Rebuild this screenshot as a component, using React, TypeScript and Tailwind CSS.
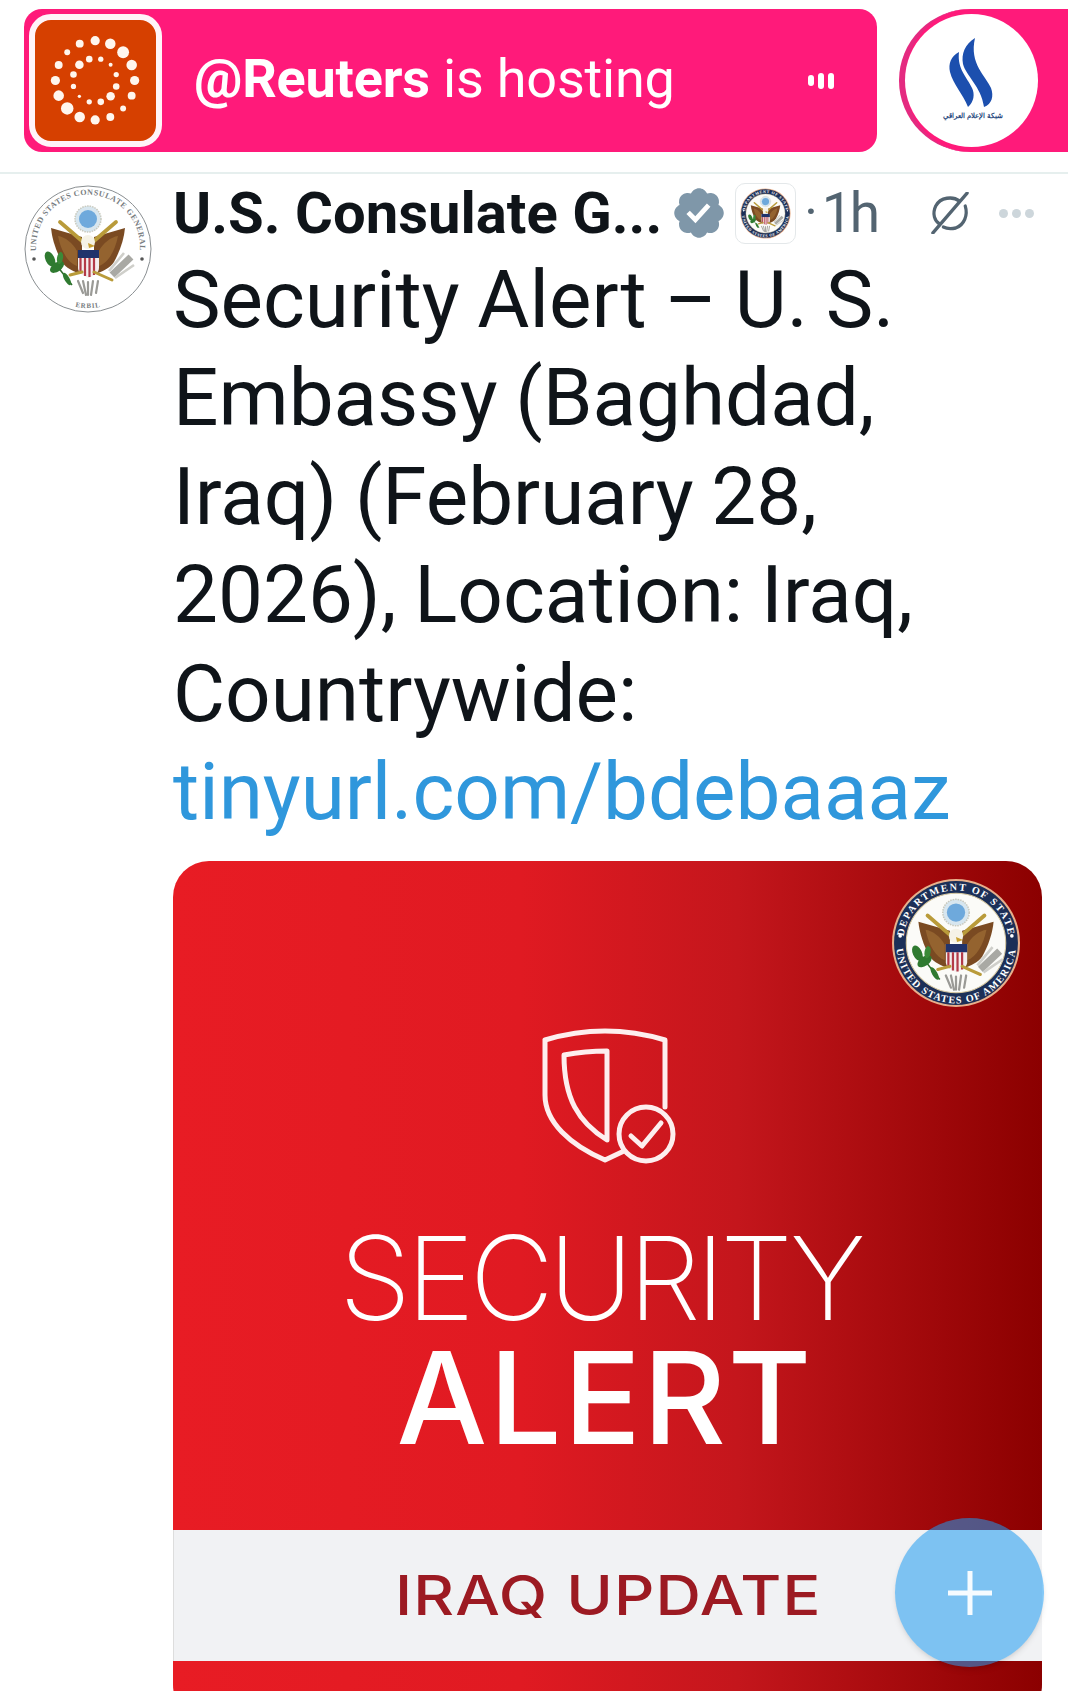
import React from "react";

const Seal = ({ id, ring = "navy" }: { id: string; ring?: "navy" | "plain" }) => {
  const plain = ring === "plain";
  return (
    <svg viewBox="-64 -64 128 128" className="w-full h-full block">
      <circle r="63" fill={plain ? "#ffffff" : "#e8b08c"} stroke={plain ? "#8a8f92" : "none"} strokeWidth={plain ? 1 : 0} />
      {!plain && <circle r="61" fill="#1c2f57" />}
      {!plain && <circle r="49" fill="#fbfbf8" stroke="#d8c9a0" strokeWidth="1" />}
      <defs>
        <path id={`${id}t`} d={plain ? "M -51 8 A 52 52 0 1 1 51 8" : "M -51 -10 A 52 52 0 0 1 51 -10"} />
        <path id={`${id}b`} d={plain ? "M -30 51 A 60 60 0 0 0 30 51" : "M -58.4 -8 A 59 59 0 1 0 58.4 -8"} />
      </defs>
      <text fontFamily="'Liberation Serif', serif" fontSize={plain ? 8 : 10} fontWeight="700" fill={plain ? "#777c80" : "#ffffff"} letterSpacing={plain ? 0.5 : 1.6} textAnchor="middle">
        <textPath href={`#${id}t`} startOffset="50%">{plain ? "UNITED STATES CONSULATE GENERAL" : "DEPARTMENT OF STATE"}</textPath>
      </text>
      <text fontFamily="'Liberation Serif', serif" fontSize={plain ? 7 : 10} fontWeight="700" fill={plain ? "#777c80" : "#ffffff"} letterSpacing={plain ? 0.8 : 1.2} textAnchor="middle">
        <textPath href={`#${id}b`} startOffset="50%">{plain ? "ERBIL" : "UNITED STATES OF AMERICA"}</textPath>
      </text>
      <circle cx={plain ? -54 : -55} cy={plain ? 10 : -7} r="1.8" fill={plain ? "#555" : "#fff"} />
      <circle cx={plain ? 54 : 55} cy={plain ? 10 : -7} r="1.8" fill={plain ? "#555" : "#fff"} />
      {/* glory */}
      <circle cx="0" cy="-30" r="13" fill="#d7e6ef" stroke="#c9c9bd" strokeWidth="1.5" strokeDasharray="1.5 1" />
      <circle cx="0" cy="-30" r="9" fill="#6ea9dc" />
      {/* wings */}
      <path d="M-37 -21 L-6 -12 L-6 25 C-14 23 -22 19 -26 13 C-32 2 -36 -10 -37 -21Z" fill="#7a4a22" />
      <path d="M37 -21 L6 -12 L6 25 C14 23 22 19 26 13 C32 2 36 -10 37 -21Z" fill="#7a4a22" />
      <path d="M-30 -13 C-23 -12 -15 -6 -11 2 L-11 17 C-20 14 -27 2 -30 -13Z M30 -13 C23 -12 15 -6 11 2 L11 17 C20 14 27 2 30 -13Z" fill="#94632f" />
      {/* rods */}
      <path d="M-28 -27 L-6 -8 M28 -27 L6 -8" stroke="#b99b3a" strokeWidth="3.8" strokeLinecap="round" />
      {/* head */}
      <circle cx="0" cy="-7" r="7" fill="#f5f2e6" />
      <path d="M0 -6 L7 -3 L1 -1Z" fill="#c8a030" />
      {/* shield */}
      <path d="M-10 1 H11 V19 C11 24 5 27 0.5 29 C-4 27 -10 24 -10 19Z" fill="#f4eeee" />
      <path d="M-10 1 H11 V9 H-10Z" fill="#20336c" />
      <path d="M-7.5 9 V24 M-3 9 V27 M1.5 9 V28 M6 9 V26" stroke="#b33a48" strokeWidth="2.2" />
      {/* olive */}
      <path d="M-16 36 L-38 8" stroke="#2c6a2a" strokeWidth="1.5" />
      <ellipse cx="-38" cy="10" rx="4.5" ry="8" fill="#2f7a30" transform="rotate(-25 -38 10)" />
      <ellipse cx="-31" cy="18" rx="4.5" ry="8" fill="#2f7a30" transform="rotate(55 -31 18)" />
      <ellipse cx="-28" cy="9" rx="3" ry="6" fill="#3b8a38" transform="rotate(10 -28 9)" />
      <ellipse cx="-21" cy="30" rx="2.6" ry="7" fill="#2f7a30" transform="rotate(-30 -21 30)" />
      <path d="M-18 26 L-6 23" stroke="#b99b3a" strokeWidth="3" strokeLinecap="round" />
      {/* arrows */}
      <path d="M24 26 L43 8" stroke="#a9a9a4" strokeWidth="7" />
      <path d="M27 29 L46 16 M21 22 L36 4" stroke="#cfcfca" strokeWidth="2.6" />
      <path d="M6 23 L24 31" stroke="#b99b3a" strokeWidth="3" strokeLinecap="round" />
      <path d="M-10 32 L-5 44 M-5 32 L-2 46 M0 33 L0 46 M5 32 L3 46 M10 32 L8 44" stroke="#9a9a96" strokeWidth="2.2" strokeLinecap="round" />
    </svg>
  );
};

const DOTS: [number, number, number][] = [
  [287,121,14],[333,130,16],[372,156,18],[398,195,16],[407,242,14],[398,288,12],[372,327,9],[333,353,12],[287,362,14],[240,353,16],[202,327,19],[176,288,16],[166,242,14],[176,195,12],[202,156,9],[240,130,12],
  [304,177,8],[334,194,6],[351,224,8],[351,260,10],[334,290,13],[304,307,10],[269,307,8],[239,290,5],[221,260,8],[221,224,10],[239,194,13],[269,177,10],
];

const ReutersLogo = () => (
  <svg viewBox="105 58 366 368" className="w-full h-full block">
    {DOTS.map(([x, y, r]) => (
      <circle key={`${x}-${y}`} cx={x} cy={y} r={r} fill="#fff6ee" />
    ))}
  </svg>
);

const IraqLogo = () => (
  <svg viewBox="0 0 132 132" className="w-[132px] h-[132px] block">
    <path d="M54 38 C46 42 43 50 45 58 C48 70 58 80 63 93 C69 88 70 80 67 74 C62 63 52 55 54 38Z" fill="#1c4fae" />
    <path d="M70 24 C60 30 56 40 58 50 C61 62 76 72 79 93 C87 90 89 82 86 74 C81 62 64 50 70 24Z" fill="#1c4fae" />
    <text x="68" y="104" textAnchor="middle" fontSize="7" fontWeight="700" fill="#2a4a7e" fontFamily="'Noto Sans', sans-serif">شبكة الإعلام العراقي</text>
  </svg>
);

const ShieldIcon = () => (
  <svg viewBox="0 0 200 180" className="w-[200px] h-[180px] block" fill="none" stroke="#fdeeee" strokeWidth="5" strokeLinejoin="round" strokeLinecap="round">
    <path d="M45 30 C85 18 125 18 165 30 V97 M45 30 V85 C45 112 70 135 105 150 L124 141" />
    <path d="M64 45 C80 42 92 41 107 41 V130 C78 112 64 88 64 45Z" />
    <circle cx="146" cy="124" r="27" />
    <path d="M131 126 L142 136 L161 113" />
  </svg>
);

export default function App() {
  return (
    <div className="w-[1068px] h-[1691px] overflow-hidden bg-white relative flex flex-col font-['Roboto',sans-serif] text-[#0f1419]">
      <div className="h-[174px] shrink-0 pt-[9px] pl-[24px] flex gap-[22px] border-b-2 border-[#e6efee]">
        <div className="w-[853px] h-[143px] bg-[#ff1a7a] rounded-[18px] flex items-center pl-[5px] pr-[43px]">
          <div className="w-[133px] h-[133px] shrink-0 bg-[#d64000] rounded-[22px] border-[6px] border-[#fff4f8]">
            <ReutersLogo />
          </div>
          <div className="ml-[32px] flex-1 whitespace-nowrap text-white text-[54px] leading-none font-normal tracking-[-0.2px] pb-[4px]">
            <span className="font-bold">@Reuters</span> is hosting
          </div>
          <div className="flex items-center gap-[4px]">
            <span className="w-[6px] h-[11px] bg-white rounded-full" />
            <span className="w-[6px] h-[16px] bg-white rounded-full" />
            <span className="w-[6px] h-[16px] bg-white rounded-full" />
          </div>
        </div>
        <div className="flex-1 h-[143px] bg-[#ff1a7a] rounded-l-[72px] border-l-[6px] border-[#e42a80] flex items-center">
          <div className="w-[133px] h-[133px] rounded-full bg-white shrink-0 overflow-hidden">
            <IraqLogo />
          </div>
        </div>
      </div>

      <div className="flex flex-1 pl-[24px] pt-[11px] gap-[21px]">
        <div className="w-[128px] h-[128px] shrink-0 rounded-full">
          <Seal id="av" ring="plain" />
        </div>
        <div className="flex-1 min-w-0 pr-[25px]">
          <div className="h-[56px] flex items-center whitespace-nowrap">
            <span className="text-[58px] leading-none font-bold tracking-[0px]">U.S. Consulate G...</span>
            <svg viewBox="0 0 22 22" className="w-[58px] h-[58px] ml-[8px] shrink-0" fill="#7f97a9">
              <path d="M20.396 11c-.018-.646-.215-1.275-.57-1.816-.354-.54-.852-.972-1.438-1.246.223-.607.27-1.264.14-1.897-.131-.634-.437-1.218-.882-1.687-.47-.445-1.053-.75-1.687-.882-.633-.13-1.29-.083-1.897.14-.273-.587-.704-1.086-1.245-1.44S11.647 1.62 11 1.604c-.646.017-1.273.213-1.813.568s-.969.854-1.24 1.44c-.608-.223-1.267-.272-1.902-.14-.635.13-1.22.436-1.69.882-.445.47-.749 1.055-.878 1.688-.13.633-.08 1.29.144 1.896-.587.274-1.087.705-1.443 1.245-.356.54-.555 1.17-.574 1.817.02.647.218 1.276.574 1.817.356.54.856.972 1.443 1.245-.224.606-.274 1.263-.144 1.896.13.634.433 1.218.877 1.688.47.443 1.054.747 1.687.878.633.132 1.29.084 1.897-.136.274.586.705 1.084 1.246 1.439.54.354 1.17.551 1.816.569.647-.016 1.276-.213 1.817-.567s.972-.854 1.245-1.44c.604.239 1.266.296 1.903.164.636-.132 1.22-.447 1.68-.907.46-.46.776-1.044.908-1.681s.075-1.299-.165-1.903c.586-.274 1.084-.705 1.439-1.246.354-.54.551-1.17.569-1.816zM9.662 14.85l-3.429-3.428 1.293-1.302 2.072 2.072 4.4-4.794 1.347 1.246z" />
            </svg>
            <div className="w-[61px] h-[61px] ml-[7px] shrink-0 rounded-[10px] border border-[#e4e8ea] p-[4px]">
              <Seal id="sm" />
            </div>
            <span className="text-[#536471] text-[52px] leading-none ml-[8px] tracking-[-1px]">·</span>
            <span className="text-[#536471] text-[55px] leading-none ml-[5px] tracking-[-3px]">1h</span>
            <svg viewBox="0 0 42 42" className="w-[40px] h-[42px] ml-[53px] shrink-0" fill="none" stroke="#536471" strokeWidth="3.4" strokeLinecap="round" preserveAspectRatio="none">
              <path d="M31 9 C24 4 11 5 6 14 C2 22 5 29 10 32" />
              <path d="M37 14 C40 23 36 33 27 36 C22 37 18 37 14 35" />
              <path d="M39 1 L3 41" />
            </svg>
            <div className="flex gap-[4px] ml-[29px]">
              <span className="w-[9px] h-[9px] rounded-full bg-[#cdd6db]" />
              <span className="w-[9px] h-[9px] rounded-full bg-[#cdd6db]" />
              <span className="w-[9px] h-[9px] rounded-full bg-[#cdd6db]" />
            </div>
          </div>
          <div className="mt-[10px] text-[80px] leading-[98.4px] tracking-[0px] [word-spacing:-2px] whitespace-nowrap">
            <div>Security Alert – U. S.</div>
            <div>Embassy (Baghdad,</div>
            <div>Iraq) (February 28,</div>
            <div>2026), Location: Iraq,</div>
            <div>Countrywide:</div>
            <div className="text-[#2f97dc]">tinyurl.com/bdebaaaz</div>
          </div>
          <div className="mt-[20px] h-[860px] w-[869px] rounded-[36px] overflow-hidden relative bg-[linear-gradient(90deg,#e81c24_0%,#e01a22_40%,#c4161c_65%,#8b0000_100%)] flex flex-col items-center">
            <div className="absolute right-[21px] top-[17px] w-[130px] h-[130px]">
              <Seal id="big" />
            </div>
            <div className="mt-[149px] mr-[16px]">
              <ShieldIcon />
            </div>
            <div className="mt-[30px] mr-[15px] text-white text-[116px] leading-none font-['Inter',sans-serif] font-extralight tracking-[-5px]">SECURITY</div>
            <div className="mt-[7px] mr-[5px] text-white text-[128px] leading-[110px] font-['Inter',sans-serif] font-medium tracking-[2px]">ALERT</div>
            <div className="absolute left-0 right-0 top-[669px] h-[131px] bg-[#f1f2f4] border-l border-[#dddddd] flex items-center justify-center">
              <span className="inline-block scale-x-[1.145] text-[#9c1a22] text-[55px] leading-none font-['Inter',sans-serif] font-medium tracking-[1px]">IRAQ UPDATE</span>
            </div>
          </div>
        </div>
      </div>

      <div className="absolute left-[895px] top-[1518px] w-[149px] h-[149px] rounded-full bg-[#1d9bf0]/55 flex items-center justify-center shadow-md">
        <svg viewBox="0 0 46 46" className="w-[46px] h-[46px]" stroke="#f6fbff" strokeWidth="5">
          <path d="M23 1 V45 M1 23 H45" />
        </svg>
      </div>
    </div>
  );
}
